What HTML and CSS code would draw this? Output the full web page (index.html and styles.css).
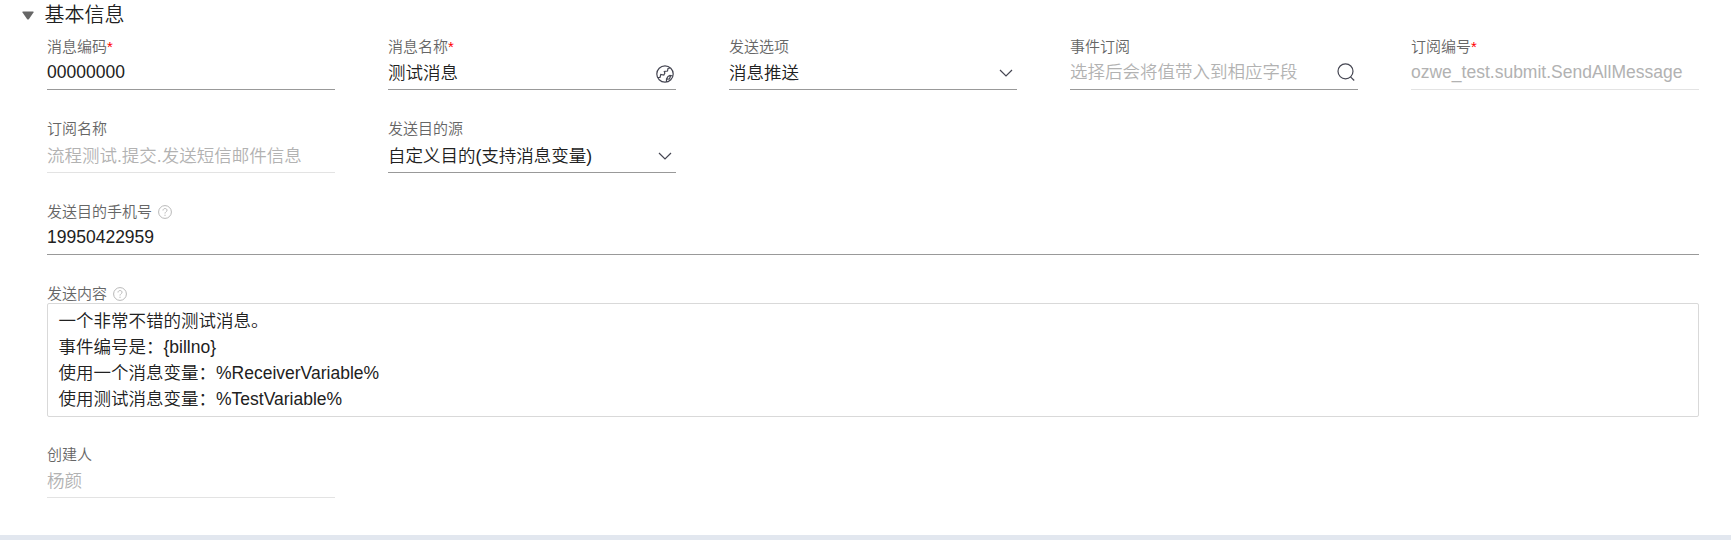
FILE: index.html
```html
<!DOCTYPE html>
<html lang="zh-CN">
<head>
<meta charset="utf-8">
<title>基本信息</title>
<link rel="stylesheet" href="styles.css">
</head>
<body>
<main class="panel">
  <header class="panel-head">
    <svg class="caret" viewBox="0 0 12 9"><path d="M1 .5h10q1 0 .5 1L7 8q-1 1-2 0L.5 1.500q-.5-1 .5-1z"/></svg>
    <h1 class="title">基本信息</h1>
  </header>
  <form class="form">
    <div class="field">
      <label class="label">消息编码<span class="required">*</span></label>
      <div class="control latin"><span class="value">00000000</span></div>
    </div>
    <div class="field">
      <label class="label">消息名称<span class="required">*</span></label>
      <div class="control"><span class="value">测试消息</span>
        <svg class="icon globe" viewBox="0 0 18 18"><circle cx="9" cy="9" r="8.200"/><path d="M1.500 12.500H4l.8-3 3 .5 1-1.800-.5-1.700 3.200-.5.5-2.500 2-.5M10.500 17v-3l1.500-2.500 2-1 2.700.5M11 14.200l2.500-.2 1-3"/></svg>
      </div>
    </div>
    <div class="field">
      <label class="label">发送选项</label>
      <div class="control"><span class="value">消息推送</span>
        <svg class="icon chevron" viewBox="0 0 14 8"><path d="M1 1l6 6 6-6"/></svg>
      </div>
    </div>
    <div class="field">
      <label class="label">事件订阅</label>
      <div class="control hint"><span class="value muted">选择后会将值带入到相应字段</span>
        <svg class="icon search" viewBox="0 0 18 18"><circle cx="8.500" cy="8.300" r="7.500"/><path d="M13.500 13.800l3.700 3.700"/></svg>
      </div>
    </div>
    <div class="field">
      <label class="label">订阅编号<span class="required">*</span></label>
      <div class="control readonly latin"><span class="value">ozwe_test.submit.SendAllMessage</span></div>
    </div>
    <div class="field">
      <label class="label">订阅名称</label>
      <div class="control readonly low"><span class="value">流程测试.提交.发送短信邮件信息</span></div>
    </div>
    <div class="field">
      <label class="label">发送目的源</label>
      <div class="control low"><span class="value">自定义目的(支持消息变量)</span>
        <svg class="icon chevron" viewBox="0 0 14 8"><path d="M1 1l6 6 6-6"/></svg>
      </div>
    </div>
    <div class="field wide">
      <label class="label">发送目的手机号
        <svg class="help" viewBox="0 0 14 14"><circle cx="7" cy="7" r="6.400"/><path d="M5 5.500C5 2.900 9 2.900 9 5.300 9 6.700 7 6.900 7 8.500M7 9.700v1.200"/></svg>
      </label>
      <div class="control latin"><span class="value">19950422959</span></div>
    </div>
    <div class="field wide content">
      <label class="label">发送内容
        <svg class="help" viewBox="0 0 14 14"><circle cx="7" cy="7" r="6.400"/><path d="M5 5.500C5 2.900 9 2.900 9 5.300 9 6.700 7 6.900 7 8.500M7 9.700v1.200"/></svg>
      </label>
      <div class="textbox">一个非常不错的测试消息。<br>事件编号是：{billno}<br>使用一个消息变量：%ReceiverVariable%<br>使用测试消息变量：%TestVariable%</div>
    </div>
    <div class="field">
      <label class="label">创建人</label>
      <div class="control readonly"><span class="value">杨颜</span></div>
    </div>
  </form>
</main>
</body>
</html>
```
FILE: styles.css
```css
* {
  box-sizing: border-box;
}

body {
  margin: 0;
  height: 540px;
  background: #e2e7ef;
  font-family: "Liberation Sans", "Noto Sans CJK SC", sans-serif;
  font-weight: 350;
  color: #212121;
  overflow: hidden;
}

.panel {
  height: 535px;
  background: #fff;
}

.panel-head {
  display: flex;
  align-items: center;
  height: 30px;
  padding-left: 22px;
  gap: 10.500px;
}

.caret {
  width: 12px;
  height: 9px;
  fill: #666;
}

.title {
  margin: 0;
  font-size: 20px;
  font-weight: 350;
  line-height: 30px;
}

.form {
  display: grid;
  grid-template-columns: repeat(5, 288px);
  column-gap: 53px;
  row-gap: 28.500px;
  padding: 6px 0 0 47px;
}

.field {
  display: flex;
  flex-direction: column;
}

.wide {
  grid-column: 1 / -1;
}

.content {
  margin-bottom: -1.500px;
}

.label {
  display: flex;
  align-items: center;
  height: 20px;
  padding-top: 1px;
  font-size: 15px;
  line-height: 20px;
  color: #666;
  white-space: nowrap;
}

.required {
  color: #f00;
}

.help {
  width: 14px;
  height: 14px;
  margin-left: 5.500px;
  fill: none;
  stroke: #b8b8b8;
}

.control {
  display: flex;
  align-items: center;
  justify-content: space-between;
  height: 34px;
  border-bottom: 1px solid #999;
  font-size: 17.500px;
  line-height: 32px;
  white-space: nowrap;
}

.readonly {
  border-color: #e3e3e3;
  color: #b2b2b2;
}

.muted {
  color: #b2b2b2;
}

.hint {
  padding-bottom: 1px;
}

.latin {
  padding-bottom: 2px;
}

.low {
  padding-top: 1px;
}

.icon {
  fill: none;
  stroke: #454652;
  stroke-width: 1.200;
}

.globe {
  width: 18px;
  height: 18px;
  margin: 3px 2px 0 0;
}

.chevron {
  width: 14px;
  height: 8px;
  margin-right: 4px;
}

.search {
  width: 18px;
  height: 18px;
  margin-right: 3px;
}

.textbox {
  height: 114px;
  margin-top: -0.500px;
  padding: 3.500px 10.500px;
  border: 1px solid #d9d9d9;
  border-radius: 2px;
  font-size: 17.500px;
  line-height: 26px;
}
```
